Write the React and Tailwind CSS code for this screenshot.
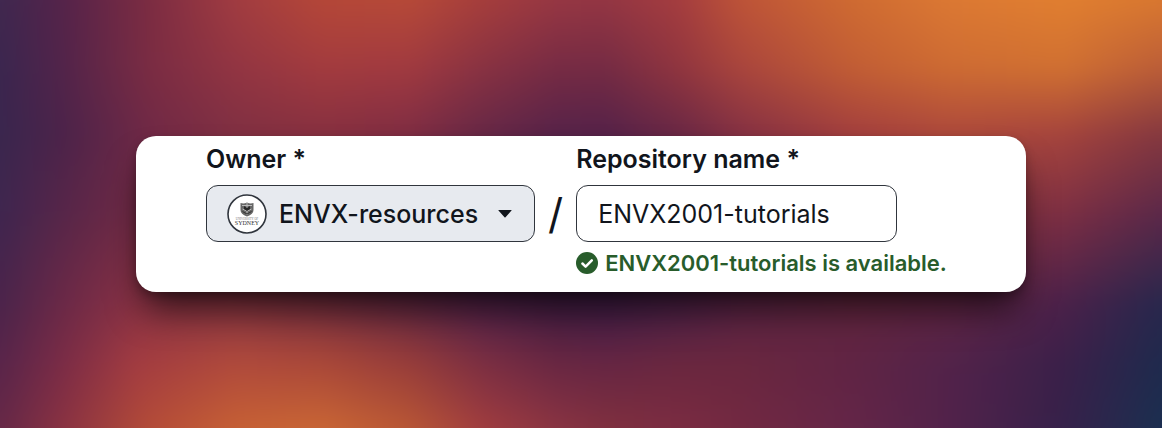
const rows = [
  "bg-[linear-gradient(90deg,#40284f_0%,#40284f_3%,#55234a_8%,#7c2c42_15%,#a13c41_22%,#b54738_29%,#b74a38_36%,#a63e3c_42%,#973743_48%,#943643_52%,#a53d3f_58%,#be5438_63%,#cf6b32_72%,#dc7933_80%,#e17f30_89%,#d97830_97%)]",
  "bg-[linear-gradient(90deg,#3b264f_3%,#52244a_8%,#7a2c43_15%,#923542_22%,#a23b3f_29%,#a03a40_36%,#883242_42%,#762b44_48%,#742b44_52%,#90353f_58%,#a9453d_63%,#c15d35_72%,#cd6b33_80%,#d07032_89%,#bb5d38_97%)] [mask-image:linear-gradient(transparent_7%,black_21%)]",
  "bg-[linear-gradient(90deg,#3a264e_3%,#4c234a_8%,#702946_15%,#803043_22%,#873040_29%,#802d43_36%,#672846_42%,#572349_48%,#552249_52%,#6a2845_58%,#853143_63%,#a33f3e_72%,#ad493c_80%,#a5443d_89%,#85383f_97%)] [mask-image:linear-gradient(transparent_21%,black_34%)]",
  "bg-[linear-gradient(90deg,#3f264f_3%,#572649_8%,#752b44_15%,#7d2d44_22%,#6d2943_29%,#60274a_36%,#522349_42%,#482248_48%,#482249_52%,#5a2648_58%,#6b294a_63%,#7d303f_72%,#863341_80%,#7d2f43_89%,#5b2849_97%)] [mask-image:linear-gradient(transparent_34%,black_50%)]",
  "bg-[linear-gradient(90deg,#4b244b_3%,#6b2947_8%,#8a3244_14%,#8a3642_22%,#7a3040_29%,#652942_36%,#522248_42%,#431d43_48%,#411d46_52%,#4d2147_58%,#5a2444_63%,#63263f_72%,#602544_80%,#4b214a_89%,#28274c_97%)] [mask-image:linear-gradient(transparent_50%,black_68%)]",
  "bg-[linear-gradient(90deg,#59254a_3%,#7b2c46_8%,#a33c41_14%,#b04a3c_22%,#aa4839_29%,#983d3a_36%,#7c2f42_42%,#692742_48%,#662643_52%,#6a273f_58%,#6a273f_63%,#602444_72%,#52234a_80%,#3b2049_89%,#1f2a4d_97%)] [mask-image:linear-gradient(transparent_68%,black_80%)]",
  "bg-[linear-gradient(90deg,#662847_3%,#8a3242_8%,#b44c38_15%,#c66035_22%,#c96635_29%,#b95735_36%,#a13d3f_42%,#8a3443_48%,#80303f_52%,#7b2c42_58%,#722942_63%,#642648_72%,#51224a_80%,#36214a_89%,#1b2f50_97%)] [mask-image:linear-gradient(transparent_80%,black_93%)]",
];

function Crest() {
  return (
    <svg viewBox="0 0 40 40" className="size-10 shrink-0" aria-hidden="true">
      <circle cx="20" cy="20" r="19" fill="#fff" stroke="#30353d" strokeWidth="1.6" />
      <path d="M13.500 9q3.500 1 6.500-.5q3 1.500 6.500.5v7q0 4-6.500 6.500q-6.500-2.500-6.500-6.500z" fill="#666" />
      <path d="M15 11.500h10M20 9v12M15.500 15l4 2M24.500 15l-4 2" stroke="#bbb" strokeWidth="1" />
      <path d="M17 12l3 2 3-2v3l-3 2-3-2z" fill="#272727" />
      <path d="M15.500 17.500l4.500 2.500 4.500-2.500" fill="none" stroke="#333" />
      <text x="20" y="26" textAnchor="middle" fontSize="3" fontFamily="Liberation Serif, serif" fill="#777">UNIVERSITY OF</text>
      <text x="20" y="31" textAnchor="middle" fontSize="6" fontFamily="Liberation Serif, serif" fill="#333">SYDNEY</text>
    </svg>
  );
}

export default function App() {
  return (
    <main className="relative isolate flex min-h-screen items-center justify-center overflow-hidden px-8 font-['Inter','Liberation_Sans',sans-serif] text-[#11151c]">
      <div className="absolute -inset-9 -z-10 blur-[10px]">
        {rows.map((row) => (
          <div key={row} className={`absolute inset-0 ${row}`} />
        ))}
      </div>
      <form
        onSubmit={(e) => e.preventDefault()}
        className="flex w-full max-w-[890px] items-start rounded-[20px] bg-white px-[70px] pt-[7px] pb-4 shadow-[0_24px_36px_-8px_rgba(0,0,0,0.65),0_4px_10px_rgba(0,0,0,0.25)]"
      >
        <div className="flex flex-col gap-[10px]">
          <label htmlFor="owner" className="text-[25px] leading-8 font-semibold">Owner *</label>
          <button
            id="owner"
            type="button"
            aria-haspopup="listbox"
            className="flex h-[57px] items-center rounded-xl border border-[#30353d] bg-[#e7eaef] pr-[22px] pl-5 text-[25px] leading-8 font-medium"
          >
            <Crest />
            <span className="ml-3">ENVX-resources</span>
            <svg viewBox="0 0 14 8" className="ml-5 h-2 w-3.5" aria-hidden="true">
              <path d="M.8 0h12.400q.8 0 .3.600l-6 6.600q-.5.500-1 0l-6-6.600q-.5-.6.3-.6z" fill="currentColor" />
            </svg>
          </button>
        </div>
        <span className="mt-[42px] flex h-[57px] w-[41px] items-center justify-center text-[42px] leading-none">/</span>
        <div className="flex flex-col">
          <label htmlFor="repository" className="mb-[10px] text-[25px] leading-8 font-semibold">Repository name *</label>
          <input
            id="repository"
            type="text"
            defaultValue="ENVX2001-tutorials"
            aria-describedby="availability"
            className="mb-2 h-[57px] w-[321px] rounded-xl border border-[#30353d] bg-white px-[21px] text-[25px] leading-8 outline-none"
          />
          <p id="availability" className="flex items-center gap-[7px] text-[22px] leading-[26px] font-semibold whitespace-nowrap text-[#285c2b]">
            <svg viewBox="0 0 22 22" className="size-[22px]" aria-hidden="true">
              <circle cx="11" cy="11" r="11" fill="currentColor" />
              <path d="M6.400 11.500l3.200 3.100 6.200-6.200" fill="none" stroke="#fff" strokeWidth="2.500" strokeLinecap="round" strokeLinejoin="round" />
            </svg>
            ENVX2001-tutorials is available.
          </p>
        </div>
      </form>
    </main>
  );
}
